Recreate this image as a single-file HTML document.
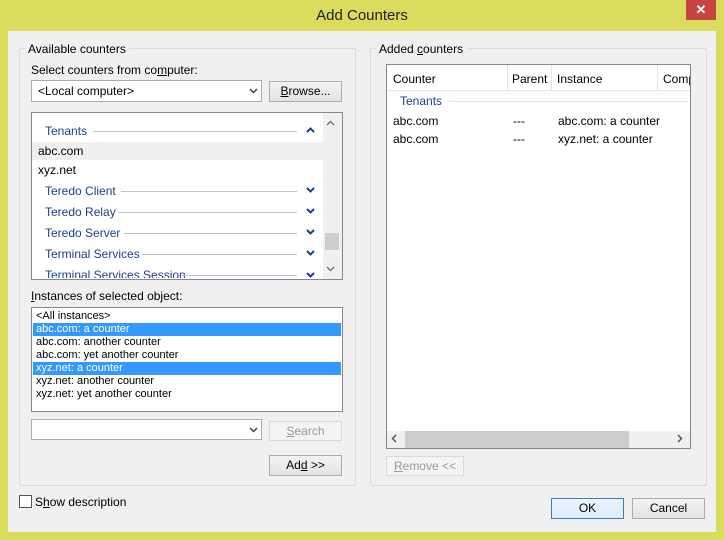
<!DOCTYPE html>
<html><head><style>
*{box-sizing:border-box;margin:0;padding:0}
body{width:724px;height:540px;background:#d9dc5c;font-family:"Liberation Sans",sans-serif;font-size:12px;color:#000;position:relative;overflow:hidden}
.a{position:absolute}
.client{left:8px;top:31px;width:708px;height:501px;background:#f0f0f0}
.title{left:0;top:7px;width:724px;text-align:center;font-size:15px;color:#222}
.close{left:686px;top:0;width:30px;height:20px;background:#c7443f;color:#fff;text-align:center;font-size:13px;line-height:20px;font-weight:bold}
.grp{border:1px solid #dcdcdc;border-radius:2px}
.lbl{background:#f0f0f0;padding:0 3px}
.box{background:#fff;border:1px solid #828790}
.btn{background:linear-gradient(#f3f3f3,#e3e3e3);border:1px solid #acacac;text-align:center;line-height:19px}
.dis{background:#f4f4f4;border:1px solid #dadada;color:#9a9a9a;text-align:center;line-height:18px}
.cat{color:#1e3f8a;font-size:12px}
.line{height:1px;background:#b9c2d6}
.sel{background:#3399ff;color:#fff}
.it{font-size:11px;line-height:13px;padding-left:3px;white-space:nowrap}
svg{position:absolute}
</style></head><body>
<div class="a title">Add Counters</div>
<div class="a close">✕</div>
<div class="a client"></div>

<div class="a grp" style="left:19px;top:48px;width:337px;height:438px"></div>
<div class="a lbl" style="left:25px;top:42px">Available counters</div>
<div class="a" style="left:31px;top:63px">Select counters from co<u>m</u>puter:</div>
<div class="a box" style="left:31px;top:80px;width:231px;height:22px;border-color:#abadb3;padding:3px 6px">&lt;Local computer&gt;</div>
<svg style="left:249px;top:88px" width="9" height="6"><path d="M1 1L4.5 4.5L8 1" stroke="#444" stroke-width="1.5" fill="none"/></svg>
<div class="a btn" style="left:269px;top:81px;width:73px;height:21px"><u>B</u>rowse...</div>

<div class="a box" style="left:31px;top:112px;width:312px;height:168px;overflow:hidden">
 <div class="a" style="left:291px;top:0;width:19px;height:166px;background:#f0f0f0"></div>
 <div class="a" style="left:293px;top:120px;width:14px;height:17px;background:#cdcdcd"></div>
 <div class="a" style="left:0;top:29px;width:291px;height:18px;background:#f0f0f0"></div>
 <div class="a" style="left:6px;top:31px">abc.com</div>
 <div class="a" style="left:6px;top:50px">xyz.net</div>
</div>
<svg style="left:326px;top:120px" width="9" height="6"><path d="M1 5L4.5 1.5L8 5" stroke="#777" stroke-width="1.5" fill="none"/></svg>
<svg style="left:326px;top:266px" width="9" height="6"><path d="M1 1L4.5 4.5L8 1" stroke="#777" stroke-width="1.5" fill="none"/></svg>
<div class="a cat" style="left:45px;top:124px">Tenants</div><div class="a line" style="left:93px;top:131px;width:204px"></div>
<svg style="left:306px;top:127px" width="9" height="6"><path d="M1 5L4.5 1.5L8 5" stroke="#1e3f8a" stroke-width="2" fill="none"/></svg>
<div class="a cat" style="left:45px;top:184px">Teredo Client</div><div class="a line" style="left:121px;top:191px;width:176px"></div>
<div class="a cat" style="left:45px;top:205px">Teredo Relay</div><div class="a line" style="left:118px;top:212px;width:179px"></div>
<div class="a cat" style="left:45px;top:226px">Teredo Server</div><div class="a line" style="left:124px;top:233px;width:173px"></div>
<div class="a cat" style="left:45px;top:247px">Terminal Services</div><div class="a line" style="left:142px;top:254px;width:155px"></div>
<svg style="left:306px;top:187px" width="9" height="6"><path d="M1 1L4.5 4.5L8 1" stroke="#1e3f8a" stroke-width="2" fill="none"/></svg>
<svg style="left:306px;top:208px" width="9" height="6"><path d="M1 1L4.5 4.5L8 1" stroke="#1e3f8a" stroke-width="2" fill="none"/></svg>
<svg style="left:306px;top:229px" width="9" height="6"><path d="M1 1L4.5 4.5L8 1" stroke="#1e3f8a" stroke-width="2" fill="none"/></svg>
<svg style="left:306px;top:250px" width="9" height="6"><path d="M1 1L4.5 4.5L8 1" stroke="#1e3f8a" stroke-width="2" fill="none"/></svg>
<div class="a" style="left:32px;top:265px;width:290px;height:13px;overflow:hidden"><div class="a cat" style="left:13px;top:3px">Terminal Services Session</div><div class="a line" style="left:150px;top:10px;width:115px"></div>
<svg style="left:274px;top:7px" width="9" height="6"><path d="M1 1L4.5 4.5L8 1" stroke="#1e3f8a" stroke-width="2" fill="none"/></svg></div>

<div class="a" style="left:31px;top:289px"><u>I</u>nstances of selected object:</div>
<div class="a box" style="left:31px;top:307px;width:312px;height:105px;padding:2px 1px">
 <div class="it">&lt;All instances&gt;</div>
 <div class="it sel">abc.com: a counter</div>
 <div class="it">abc.com: another counter</div>
 <div class="it">abc.com: yet another counter</div>
 <div class="it sel">xyz.net: a counter</div>
 <div class="it">xyz.net: another counter</div>
 <div class="it">xyz.net: yet another counter</div>
</div>
<div class="a box" style="left:31px;top:419px;width:231px;height:21px;border-color:#abadb3"></div>
<svg style="left:249px;top:427px" width="9" height="6"><path d="M1 1L4.5 4.5L8 1" stroke="#444" stroke-width="1.5" fill="none"/></svg>
<div class="a dis" style="left:269px;top:421px;width:73px;height:20px"><u>S</u>earch</div>
<div class="a btn" style="left:269px;top:455px;width:73px;height:21px">Ad<u>d</u> &gt;&gt;</div>

<div class="a" style="left:19px;top:495px;width:13px;height:13px;background:#fff;border:1px solid #555"></div>
<div class="a" style="left:35px;top:495px">S<u>h</u>ow description</div>

<div class="a grp" style="left:370px;top:48px;width:337px;height:438px"></div>
<div class="a lbl" style="left:376px;top:42px">Added <u>c</u>ounters</div>
<div class="a box" style="left:386px;top:64px;width:305px;height:385px;overflow:hidden">
 <div class="a" style="left:0;top:0;width:305px;height:26px;border-bottom:1px solid #e5e5e5"></div>
 <div class="a" style="left:120px;top:0;width:1px;height:26px;background:#e5e5e5"></div>
 <div class="a" style="left:164px;top:0;width:1px;height:26px;background:#e5e5e5"></div>
 <div class="a" style="left:270px;top:0;width:1px;height:26px;background:#e5e5e5"></div>
 <div class="a" style="left:6px;top:7px">Counter</div>
 <div class="a" style="left:125px;top:7px">Parent</div>
 <div class="a" style="left:170px;top:7px">Instance</div>
 <div class="a" style="left:276px;top:7px">Comp</div>
 <div class="a cat" style="left:13px;top:29px">Tenants</div><div class="a line" style="left:62px;top:36px;width:240px;background:#dde2ea"></div>
 <div class="a" style="left:6px;top:49px">abc.com</div><div class="a" style="left:126px;top:49px">---</div><div class="a" style="left:171px;top:49px">abc.com: a counter</div>
 <div class="a" style="left:6px;top:67px">abc.com</div><div class="a" style="left:126px;top:67px">---</div><div class="a" style="left:171px;top:67px">xyz.net: a counter</div>
 <div class="a" style="left:0;top:366px;width:305px;height:17px;background:#f0f0f0"></div>
 <div class="a" style="left:18px;top:366px;width:224px;height:17px;background:#cdcdcd"></div>
</div>
<svg style="left:391px;top:434px" width="6" height="9"><path d="M5 1L1.5 4.5L5 8" stroke="#555" stroke-width="1.5" fill="none"/></svg>
<svg style="left:677px;top:434px" width="6" height="9"><path d="M1 1L4.5 4.5L1 8" stroke="#555" stroke-width="1.5" fill="none"/></svg>
<div class="a dis" style="left:386px;top:456px;width:78px;height:20px"><u>R</u>emove &lt;&lt;</div>

<div class="a btn" style="left:551px;top:498px;width:73px;height:21px;border-color:#3c7fb1;background:linear-gradient(#ecf4fc,#dcecfc)">OK</div>
<div class="a btn" style="left:632px;top:498px;width:73px;height:21px">Cancel</div>
</body></html>
